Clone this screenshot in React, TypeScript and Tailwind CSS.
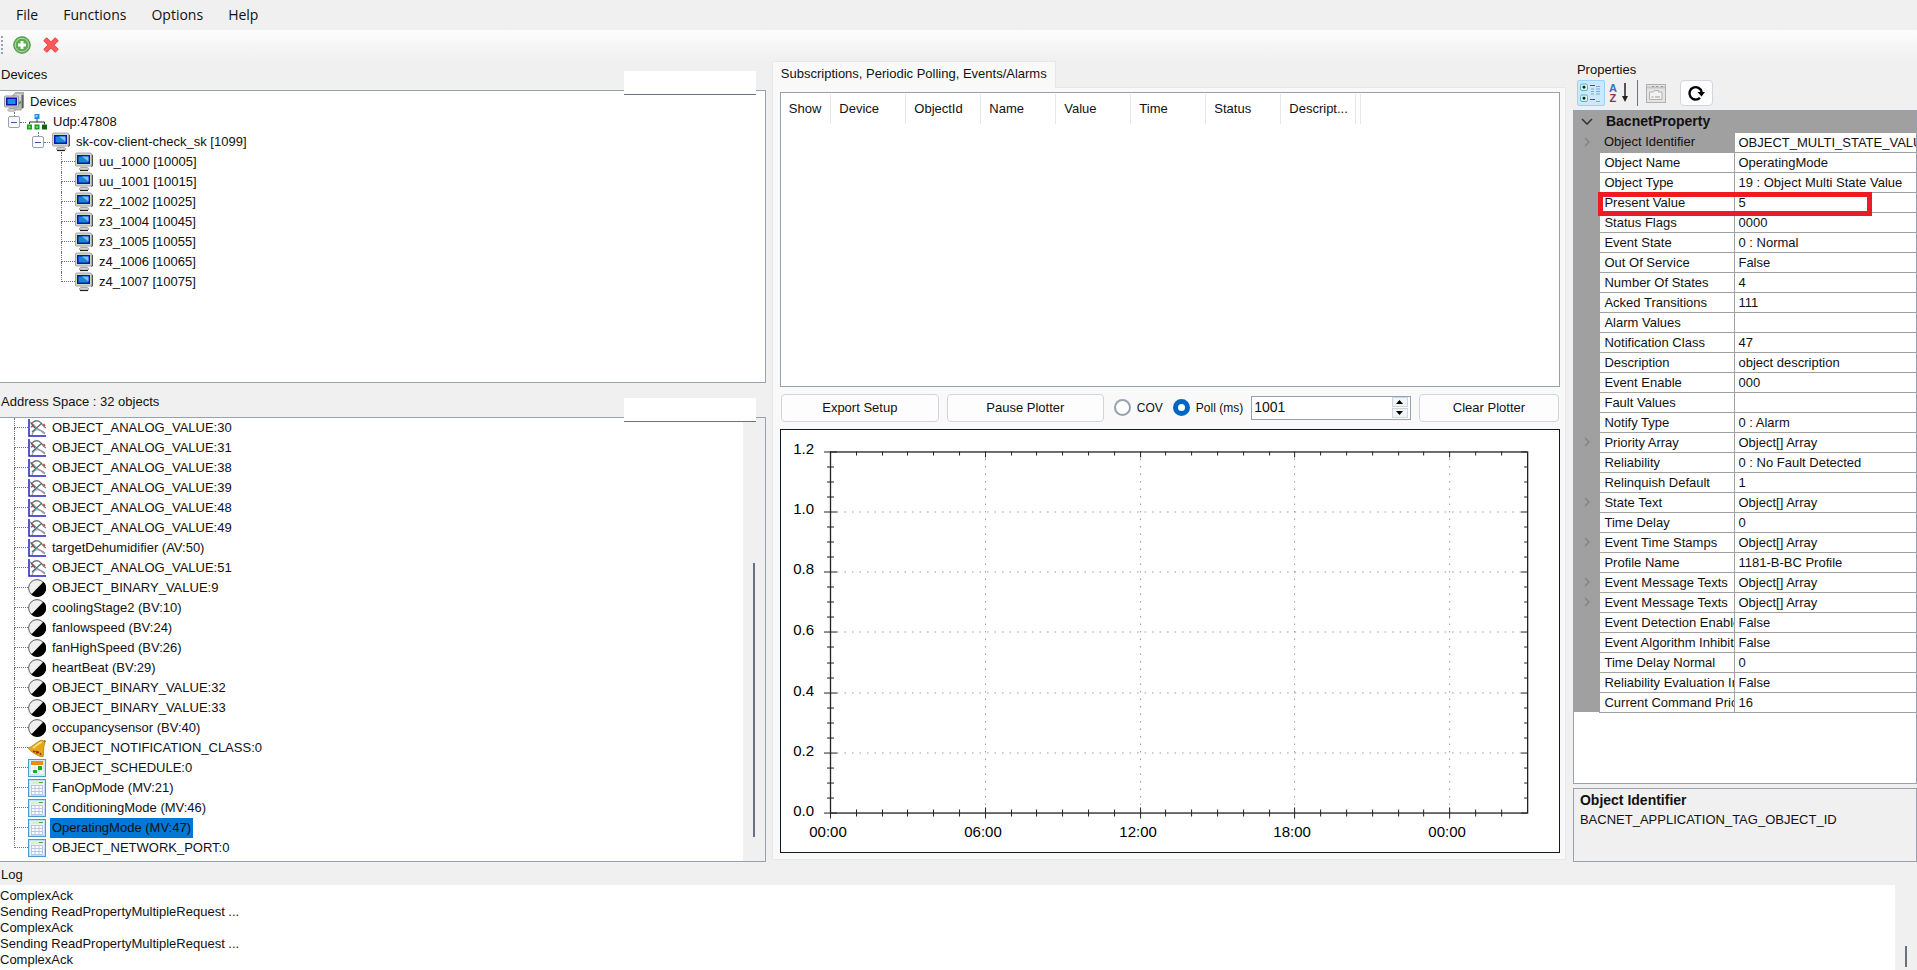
import type { ReactNode } from "react"

const devices = [
  "uu_1000 [10005]",
  "uu_1001 [10015]",
  "z2_1002 [10025]",
  "z3_1004 [10045]",
  "z3_1005 [10055]",
  "z4_1006 [10065]",
  "z4_1007 [10075]",
]

type ObjectKind = "analog" | "binary" | "bell" | "schedule" | "table"

const objects: { kind: ObjectKind; name: string; selected?: boolean }[] = [
  { kind: "analog", name: "OBJECT_ANALOG_VALUE:30" },
  { kind: "analog", name: "OBJECT_ANALOG_VALUE:31" },
  { kind: "analog", name: "OBJECT_ANALOG_VALUE:38" },
  { kind: "analog", name: "OBJECT_ANALOG_VALUE:39" },
  { kind: "analog", name: "OBJECT_ANALOG_VALUE:48" },
  { kind: "analog", name: "OBJECT_ANALOG_VALUE:49" },
  { kind: "analog", name: "targetDehumidifier (AV:50)" },
  { kind: "analog", name: "OBJECT_ANALOG_VALUE:51" },
  { kind: "binary", name: "OBJECT_BINARY_VALUE:9" },
  { kind: "binary", name: "coolingStage2 (BV:10)" },
  { kind: "binary", name: "fanlowspeed (BV:24)" },
  { kind: "binary", name: "fanHighSpeed (BV:26)" },
  { kind: "binary", name: "heartBeat (BV:29)" },
  { kind: "binary", name: "OBJECT_BINARY_VALUE:32" },
  { kind: "binary", name: "OBJECT_BINARY_VALUE:33" },
  { kind: "binary", name: "occupancysensor (BV:40)" },
  { kind: "bell", name: "OBJECT_NOTIFICATION_CLASS:0" },
  { kind: "schedule", name: "OBJECT_SCHEDULE:0" },
  { kind: "table", name: "FanOpMode (MV:21)" },
  { kind: "table", name: "ConditioningMode (MV:46)" },
  { kind: "table", name: "OperatingMode (MV:47)", selected: true },
  { kind: "table", name: "OBJECT_NETWORK_PORT:0" },
]

const properties: { name: string; value: string; expandable?: boolean }[] = [
  { name: "Object Identifier", value: "OBJECT_MULTI_STATE_VALUE:47", expandable: true },
  { name: "Object Name", value: "OperatingMode" },
  { name: "Object Type", value: "19 : Object Multi State Value" },
  { name: "Present Value", value: "5" },
  { name: "Status Flags", value: "0000" },
  { name: "Event State", value: "0 : Normal" },
  { name: "Out Of Service", value: "False" },
  { name: "Number Of States", value: "4" },
  { name: "Acked Transitions", value: "111" },
  { name: "Alarm Values", value: "" },
  { name: "Notification Class", value: "47" },
  { name: "Description", value: "object description" },
  { name: "Event Enable", value: "000" },
  { name: "Fault Values", value: "" },
  { name: "Notify Type", value: "0 : Alarm" },
  { name: "Priority Array", value: "Object[] Array", expandable: true },
  { name: "Reliability", value: "0 : No Fault Detected" },
  { name: "Relinquish Default", value: "1" },
  { name: "State Text", value: "Object[] Array", expandable: true },
  { name: "Time Delay", value: "0" },
  { name: "Event Time Stamps", value: "Object[] Array", expandable: true },
  { name: "Profile Name", value: "1181-B-BC Profile" },
  { name: "Event Message Texts", value: "Object[] Array", expandable: true },
  { name: "Event Message Texts", value: "Object[] Array", expandable: true },
  { name: "Event Detection Enable", value: "False" },
  { name: "Event Algorithm Inhibit", value: "False" },
  { name: "Time Delay Normal", value: "0" },
  { name: "Reliability Evaluation Inhibit", value: "False" },
  { name: "Current Command Priority", value: "16" },
]

const columns = ["Device", "ObjectId", "Name", "Value", "Time", "Status", "Descript..."]

const log = [
  "ComplexAck",
  "Sending ReadPropertyMultipleRequest ...",
  "ComplexAck",
  "Sending ReadPropertyMultipleRequest ...",
  "ComplexAck",
]

function MonitorIcon() {
  return (
    <svg viewBox="0 0 18 20" className="h-5 w-[18px] shrink-0">
      <path d="M16 2l2 1v11l-2 1z" fill="#555" />
      <rect x="0.5" y="1" width="16" height="13" rx="1" fill="#d4d4d0" stroke="#a8a8a8" />
      <rect x="2" y="3" width="13" height="9" fill="#0a14b4" />
      <rect x="3.5" y="4.5" width="10" height="6" fill="#1487d8" />
      <path d="M7 4.500h6.500v5z" fill="#7fc0f0" />
      <path d="M6 14h6l1 2H5z" fill="#c8c8c8" />
      <ellipse cx="9" cy="17" rx="5" ry="1.500" fill="#d8d8d8" stroke="#888" strokeWidth="0.6" />
      <path d="M5 18.500h8" stroke="#222" strokeWidth="1.200" />
    </svg>
  )
}

function ServerIcon() {
  return (
    <svg viewBox="0 0 20 20" className="size-5 shrink-0">
      <path d="M9 3l3-3h7l1 1v14l-3 3H9z" fill="#b8b8b4" stroke="#888" strokeWidth="0.6" />
      <path d="M11 3h6M11 5h6M11 7h6" stroke="#f2f2f2" />
      <path d="M18.500 3v13" stroke="#5a5a5a" strokeWidth="1.600" />
      <path d="M14 12l3-2" stroke="#1fae1f" strokeWidth="2" />
      <rect x="0.500" y="4" width="14" height="11" rx="1" fill="#d6d6d2" stroke="#999" />
      <rect x="2" y="5.500" width="11" height="8" fill="#0a14b4" />
      <rect x="3.500" y="7" width="8" height="5" fill="#1c90dc" />
      <path d="M5 15h5v2H5z" fill="#bbb" />
      <ellipse cx="7.500" cy="18" rx="4" ry="1.300" fill="#ddd" stroke="#777" strokeWidth="0.600" />
    </svg>
  )
}

function NetworkIcon() {
  return (
    <svg viewBox="0 0 20 20" className="size-5 shrink-0">
      <path d="M10 6v4M2.500 12v-2h15v2" fill="none" stroke="#333" />
      <rect x="7.500" y="2" width="5" height="5" fill="#2c8ae0" />
      <rect x="8.500" y="3" width="2" height="2" fill="#9ad0ff" />
      <rect x="0" y="12.500" width="5" height="5" fill="#18a018" />
      <rect x="1.500" y="14" width="2" height="2" fill="#5be05b" />
      <rect x="7.500" y="12.500" width="5" height="5" fill="#18a018" />
      <rect x="9" y="14" width="2" height="2" fill="#5be05b" />
      <rect x="15" y="12.500" width="5" height="5" fill="#0b660b" />
    </svg>
  )
}

function ObjectIcon({ kind }: { kind: ObjectKind }) {
  switch (kind) {
    case "analog":
      return (
        <svg viewBox="0 0 18 18" className="size-[18px] shrink-0" fill="none">
          <path d="M4 4C7 1 11 1 13 4s3 4 5 5" stroke="#777" strokeWidth="1.300" />
          <path d="M2 3c3 1 5 5 8 7s5 2 7 4" stroke="#999" strokeWidth="1.200" />
          <path d="M4 16c1-4 4-6 7-5s4 3 6 4" stroke="#999" strokeWidth="1.200" />
          <path d="M3 4l4 5" stroke="#555" strokeWidth="1.300" />
          <path d="M3 8l2-1M15.500 5l1.500 2" stroke="#d04040" strokeWidth="1.500" />
          <path d="M4 13l10-9" stroke="#3f7474" strokeWidth="1.300" />
          <path d="M1 0v17h17" stroke="#2020c8" strokeWidth="1.500" />
        </svg>
      )
    case "binary":
      return (
        <svg viewBox="0 0 18 18" className="size-[18px] shrink-0">
          <circle cx="9" cy="9" r="8.400" fill="#efefef" stroke="#333" strokeWidth="0.800" />
          <path d="M15.500 2.800A8.700 8.700 0 0 1 3.200 15.500z" fill="#000" />
        </svg>
      )
    case "bell":
      return (
        <svg viewBox="0 0 18 18" className="size-[18px] shrink-0">
          <path d="M16.500 0.800L18 2l-1 2-2-2z" fill="#b07808" />
          <path d="M0 9C5 8 9 2 14 1l3 3c-2 4-1 10-2 14C9 17 3 13 0 9z" fill="#e6a817" stroke="#a87408" strokeWidth="0.700" />
          <path d="M5 9c3-2 5-5 9-6" stroke="#ffe38a" strokeWidth="1.600" fill="none" />
          <path d="M5 12l2 1M8 12l1 2 2-1M12 14l1 2" stroke="#a03008" strokeWidth="1.500" />
        </svg>
      )
    case "schedule":
      return (
        <svg viewBox="0 0 18 18" className="size-[18px] shrink-0">
          <rect x="0.500" y="0.500" width="17" height="17" fill="#cfe8fa" stroke="#4a9ccc" />
          <rect x="3" y="3" width="12" height="12" fill="#fff" />
          <rect x="3" y="2" width="12" height="4" fill="#f08a10" />
          <path d="M3 9h12M3 12h12M7 6v9M11 6v9" stroke="#c8d4e4" strokeWidth="0.700" />
          <rect x="10" y="7" width="4" height="4" fill="#16b016" />
          <rect x="5" y="11" width="4" height="3" fill="#16b016" />
        </svg>
      )
    case "table":
      return (
        <svg viewBox="0 0 18 18" className="size-[18px] shrink-0">
          <rect x="0.500" y="0.500" width="17" height="17" fill="#bfe0f8" stroke="#4a9ccc" />
          <path d="M2 2h14v14H2z" fill="#eaf5fd" />
          <rect x="3" y="2.500" width="12" height="2.500" fill="#d8efc8" />
          <path d="M11 3.500h4" stroke="#4aa82a" />
          <rect x="3.500" y="6.500" width="11" height="9" fill="#fff" stroke="#a8bcdc" strokeWidth="0.800" />
          <path d="M7 6.500v9M11 6.500v9M3.500 9.500h11M3.500 12.500h11" stroke="#a8bcdc" strokeWidth="0.800" />
        </svg>
      )
  }
}

function Expander({ label }: { label: string }) {
  return (
    <span className="flex h-5 w-3 flex-col items-center">
      <span className="h-1 border-l border-dotted border-gray-500" />
      <button
        aria-label={label}
        className="flex size-3 items-center justify-center rounded-xs border border-gray-400 bg-gray-50"
      >
        <span className="h-px w-1.5 bg-[#3c5aa0]" />
      </button>
    </span>
  )
}

function Branch({ last }: { last: boolean }) {
  return (
    <span className="flex h-5 w-3.5 flex-col">
      <span className="h-2.5 border-b border-l border-dotted border-gray-500" />
      {!last && <span className="h-2.5 border-l border-dotted border-gray-500" />}
    </span>
  )
}

function DeviceTree() {
  return (
    <ul className="py-px">
      <li className="flex h-5 items-center gap-1.5 pl-1">
        <ServerIcon />
        Devices
      </li>
      <li className="flex h-5 items-center pl-2">
        <Expander label="Collapse Udp:47808" />
        <span className="mr-px w-1.5 border-b border-dotted border-gray-500" />
        <NetworkIcon />
        <span className="ml-1.5">Udp:47808</span>
      </li>
      <li className="flex h-5 items-center pl-8">
        <Expander label="Collapse sk-cov-client-check_sk" />
        <span className="mr-0.5 w-1.5 border-b border-dotted border-gray-500" />
        <MonitorIcon />
        <span className="ml-1.5">sk-cov-client-check_sk [1099]</span>
      </li>
      {devices.map((name, i) => (
        <li key={name} className="flex h-5 items-center pl-[61px]">
          <Branch last={i === devices.length - 1} />
          <MonitorIcon />
          <span className="ml-1.5">{name}</span>
        </li>
      ))}
    </ul>
  )
}

function ObjectTree() {
  return (
    <ul className="min-w-0 flex-1">
      {objects.map((object, i) => (
        <li key={object.name} className="flex h-5 items-center pl-3.5">
          <Branch last={i === objects.length - 1} />
          <ObjectIcon kind={object.kind} />
          <span className={object.selected ? "ml-1 bg-[#0078d7] px-0.5 leading-5" : "ml-1 px-0.5"}>
            {object.name}
          </span>
        </li>
      ))}
    </ul>
  )
}

function PanelHeader({ title, field, className }: { title: string; field: string; className: string }) {
  return (
    <div className={`relative flex items-center px-px ${className}`}>
      <h2>{title}</h2>
      <input
        aria-label={field}
        className="absolute right-2.5 -bottom-[5px] h-6 w-[132px] border-b border-gray-500 bg-white outline-none"
      />
    </div>
  )
}

// plot area inside the chart, in viewBox units
const plot = { left: 49, right: 746, top: 21, bottom: 382, hour: 25.8, step: 15.05 }

function Plotter() {
  const hours = Array.from({ length: 27 }, (_, i) => i)
  const steps = Array.from({ length: 25 }, (_, i) => i)
  return (
    <svg viewBox="0 0 778 421" className="size-full" fontFamily="Liberation Sans, Arial, sans-serif" fontSize="15">
      <g stroke="#999" strokeDasharray="1.500 6">
        {[1, 2, 3, 4].map((i) => {
          const x = Math.round(plot.left + i * 6 * plot.hour) + 0.5
          return <line key={i} x1={x} x2={x} y1={plot.top + 7} y2={plot.bottom} />
        })}
        {[1, 2, 3, 4, 5].map((i) => {
          const y = Math.round(plot.bottom - i * 4 * plot.step) + 0.5
          return <line key={i} x1={plot.left + 7} x2={plot.right} y1={y} y2={y} />
        })}
      </g>
      <g stroke="#222">
        {hours.map((i) => {
          const x = Math.round(plot.left + i * plot.hour) + 0.5
          const size = i % 6 === 0 ? 5 : 3
          return (
            <g key={i}>
              <line x1={x} x2={x} y1={plot.bottom - size} y2={plot.bottom + size + 1} />
              <line x1={x} x2={x} y1={plot.top} y2={plot.top + size + 1} />
            </g>
          )
        })}
        {steps.map((i) => {
          const y = Math.round(plot.bottom - i * plot.step) + 0.5
          const size = i % 4 === 0 ? 6 : 3
          return (
            <g key={i}>
              <line x1={plot.left - size} x2={plot.left + size + 1} y1={y} y2={y} />
              <line x1={plot.right - size} x2={plot.right} y1={y} y2={y} />
            </g>
          )
        })}
        <rect
          x={plot.left + 0.5}
          y={plot.top + 0.5}
          width={plot.right - plot.left}
          height={plot.bottom - plot.top}
          fill="none"
          strokeWidth="1.300"
        />
      </g>
      {["0.0", "0.2", "0.4", "0.6", "0.8", "1.0", "1.2"].map((label, i) => (
        <text key={label} x="33" y={Math.round(plot.bottom - i * 4 * plot.step) + 3} textAnchor="end">
          {label}
        </text>
      ))}
      {["00:00", "06:00", "12:00", "18:00", "00:00"].map((label, i) => (
        <text key={i} x={Math.round(plot.left + i * 6 * plot.hour) - 2} y="406" textAnchor="middle">
          {label}
        </text>
      ))}
    </svg>
  )
}

function PlotButton({ children, className }: { children: ReactNode; className: string }) {
  return (
    <button className={`h-7 shrink-0 rounded border border-gray-300 bg-[#fdfdfd] ${className}`}>{children}</button>
  )
}

function PlotControls() {
  const radio =
    "size-[17px] shrink-0 appearance-none rounded-full border-2 border-gray-400 bg-white checked:border-[5px] checked:border-[#0067c0]"
  return (
    <div className="my-[7px] flex h-7 items-center px-px">
      <PlotButton className="w-[158px]">Export Setup</PlotButton>
      <PlotButton className="ml-2 w-[157px]">Pause Plotter</PlotButton>
      <label className="ml-2.5 flex shrink-0 items-center gap-1.5 text-xs">
        <input type="radio" name="mode" className={radio} />
        COV
      </label>
      <label className="ml-2.5 flex shrink-0 items-center gap-1.5 text-xs">
        <input type="radio" name="mode" defaultChecked className={radio} />
        Poll (ms)
      </label>
      <div className="ml-2 flex h-6 min-w-0 flex-1 items-center border border-gray-400 bg-white pr-0.5">
        <input aria-label="Poll interval" defaultValue="1001" className="w-0 flex-1 px-0.5 text-[14px] outline-none" />
        <div className="flex flex-col gap-px">
          <button aria-label="Increase" className="flex h-2.5 w-4 items-center justify-center border border-gray-300 bg-gray-100">
            <svg viewBox="0 0 7 4" className="h-1 w-[7px]">
              <path d="M0 4L3.500 0 7 4z" />
            </svg>
          </button>
          <button aria-label="Decrease" className="flex h-2.5 w-4 items-center justify-center border border-gray-300 bg-gray-100">
            <svg viewBox="0 0 7 4" className="h-1 w-[7px]">
              <path d="M0 0L3.500 4 7 0z" />
            </svg>
          </button>
        </div>
      </div>
      <PlotButton className="ml-2 w-[140px]">Clear Plotter</PlotButton>
    </div>
  )
}

function Subscriptions() {
  return (
    <section className="mr-1.5 ml-[5px] flex min-w-0 flex-1 flex-col pt-px pb-0.5">
      <div role="tablist" className="z-10 flex">
        <button role="tab" aria-selected="true" className="-mb-px h-[27px] border border-b-0 border-gray-200 bg-[#f9f9f9] px-2 pb-[3px]">
          Subscriptions, Periodic Polling, Events/Alarms
        </button>
      </div>
      <div className="flex min-h-0 flex-1 flex-col border border-gray-200 bg-[#f9f9f9] pt-1 pr-[5px] pb-1.5 pl-[7px]">
        <div className="min-h-0 flex-294 border border-gray-400 bg-white pt-px">
          <table className="table-fixed text-left">
            <thead>
              <tr className="h-[30px]">
                <th className="w-[50px] border-r border-gray-200 pl-2 font-normal">Show</th>
                {columns.map((name) => (
                  <th key={name} className="w-[75px] border-r border-gray-200 pl-2 font-normal">
                    {name}
                  </th>
                ))}
                <th className="w-[5px] border-r border-gray-200" />
              </tr>
            </thead>
          </table>
        </div>
        <PlotControls />
        <div className="min-h-0 flex-425 border border-gray-900 bg-white">
          <Plotter />
        </div>
      </div>
    </section>
  )
}

function PropertyToolbar() {
  return (
    <div className="flex h-[30px] items-start pl-1">
      <button aria-label="Categorized" className="flex h-[26px] w-7 items-center justify-center rounded-xs border border-[#99d1ff] bg-[#cce8ff]">
        <svg viewBox="0 0 21 20" className="h-5 w-[21px]">
          <rect x="0.500" y="1" width="7" height="6.500" rx="1.500" fill="#d8f6f0" stroke="#5cb8b0" />
          <rect x="0.500" y="12" width="7" height="6.500" rx="1.500" fill="#d8f6f0" stroke="#5cb8b0" />
          <path d="M2.500 4.200h3M4 2.700v3M2.500 15.200h3M4 13.700v3" stroke="#000" strokeWidth="1.300" />
          <path d="M10 2.500h5M10 16.500h5" stroke="#555" />
          <path d="M11 6h3M16 6h4M11 8.500h3M16 8.500h4M11 11h3M16 11h4M16 3.500h4M16 18.500h4" stroke="#7aa4d8" />
        </svg>
      </button>
      <button aria-label="Alphabetical" className="ml-1 flex h-[26px] items-center">
        <span className="flex flex-col text-[11px] leading-[10px] font-bold">
          <span className="text-[#3a6fc8]">A</span>
          <span className="text-[#8c3050]">Z</span>
        </span>
        <svg viewBox="0 0 8 20" className="ml-1 h-5 w-2">
          <path d="M4 0v16" stroke="#222" strokeWidth="1.500" />
          <path d="M1 13h6l-3 6z" fill="#222" />
        </svg>
      </button>
      <span className="mx-2 h-[26px] w-px bg-gray-500" />
      <button aria-label="Property pages" disabled className="flex h-[26px] items-center">
        <svg viewBox="0 0 20 19" className="h-[19px] w-5" fill="none" stroke="#b0b0b0">
          <rect x="0.500" y="0.500" width="19" height="18" fill="#e4e4e4" />
          <path d="M1 3.500h18" stroke="#c4c4c4" strokeWidth="2" />
          <path d="M6 2.500h2M10 2.500h2M15 2.500h2" stroke="#999" />
          <path d="M3.500 8h4l1-1.500h4V8H16v7.500H3.500z" fill="#f2f2f2" />
          <path d="M5.500 13h2M9 13h5" stroke="#999" />
        </svg>
      </button>
      <button aria-label="Refresh" className="ml-3.5 flex h-[26px] w-[33px] items-center justify-center rounded border border-gray-300 bg-[#fdfdfd]">
        <svg viewBox="0 0 18 18" className="size-[18px]">
          <path d="M13 13.800A6.200 6.200 0 1 1 14.700 8" fill="none" stroke="#000" strokeWidth="2.400" />
          <path d="M10.500 8H18l-3.500 4.500z" />
        </svg>
      </button>
    </div>
  )
}

function PropertyPanel() {
  return (
    <section className="flex w-[18%] flex-col pl-px">
      <h2 className="h-5 pl-1 leading-5">Properties</h2>
      <PropertyToolbar />
      <div className="relative min-h-0 flex-1 border border-gray-400 bg-white">
        <table className="w-full table-fixed border-collapse">
          <colgroup>
            <col className="w-[26px]" />
            <col className="w-[135px]" />
            <col />
          </colgroup>
          <tbody>
            <tr className="h-[21px] bg-[#a0a0a0]">
              <td className="text-center">
                <svg viewBox="0 0 12 7" className="mx-auto h-[7px] w-3">
                  <path d="M1 1l5 5 5-5" fill="none" stroke="#333" strokeWidth="1.600" />
                </svg>
              </td>
              <th colSpan={2} className="py-0 pl-1.5 text-left text-[14px] leading-5 font-bold">
                BacnetProperty
              </th>
            </tr>
            {properties.map((property, i) => (
              <tr key={i} className="h-5">
                <td className="bg-[#a0a0a0] p-0">
                  {property.expandable && (
                    <svg viewBox="0 0 6 10" className="mx-auto h-2.5 w-1.5">
                      <path d="M1 1l4 4-4 4" fill="none" stroke="#828282" strokeWidth="1.400" />
                    </svg>
                  )}
                </td>
                <td
                  className={
                    i === 0
                      ? "overflow-hidden bg-[#a0a0a0] py-0 pl-1 leading-[19px] whitespace-nowrap"
                      : "overflow-hidden border border-[#a0a0a0] py-0 pl-1 leading-[19px] whitespace-nowrap"
                  }
                >
                  {property.name}
                </td>
                <td className="overflow-hidden border-y border-l border-[#a0a0a0] py-0 pl-[3px] leading-[19px] whitespace-nowrap">
                  {property.value}
                </td>
              </tr>
            ))}
          </tbody>
        </table>
        <div className="absolute top-[81px] left-6 h-6 w-4/5 border-[5px] border-[#ed1c24]" />
      </div>
      <div className="mt-1 h-[74px] border border-gray-400 px-1.5 pt-0.5 text-[14px] leading-[19px]">
        <h3 className="font-bold">Object Identifier</h3>
        <p className="text-[13px]">BACNET_APPLICATION_TAG_OBJECT_ID</p>
      </div>
    </section>
  )
}

export default function App() {
  return (
    <div className="flex h-screen flex-col overflow-hidden bg-[#f0f0f0] font-['Liberation_Sans',Arial,sans-serif] text-[13px] text-[#111]">
      <nav className="flex h-[30px] items-center gap-[25px] pb-0.5 pl-4 font-['Open_Sans','Noto_Sans',sans-serif] text-[14px]">
        <button>File</button>
        <button>Functions</button>
        <button>Options</button>
        <button>Help</button>
      </nav>
      <div className="flex h-[30px] items-center bg-linear-to-b from-[#fdfdfd] to-[#f0f0f0] pl-px">
        <span className="h-[18px] border-l-2 border-dotted border-gray-400" />
        <button aria-label="Add device" className="ml-2.5">
          <svg viewBox="0 0 18 18" className="size-[18px]">
            <circle cx="9" cy="9" r="8.300" fill="#5cae50" stroke="#4c9444" />
            <circle cx="9" cy="9" r="6.800" fill="none" stroke="#b4dcaa" />
            <path d="M9 5v8M5 9h8" stroke="#fff" strokeWidth="2.800" />
          </svg>
        </button>
        <button aria-label="Remove device" className="ml-3">
          <svg viewBox="0 0 16 16" className="size-4">
            <path d="M2 2l12 12M14 2L2 14" stroke="#e43c3c" strokeWidth="5" />
            <path d="M2 2l12 12M14 2L2 14" stroke="#ff5a5a" strokeWidth="3.400" />
          </svg>
        </button>
      </div>
      <main className="flex min-h-0 flex-1">
        <section className="flex w-2/5 flex-col pr-px">
          <PanelHeader title="Devices" field="Find device" className="h-[30px]" />
          <div className="min-h-0 flex-292 border-y border-r border-gray-400 bg-white">
            <DeviceTree />
          </div>
          <PanelHeader title="Address Space : 32 objects" field="Find object" className="h-[34px] pt-1" />
          <div className="flex min-h-0 flex-445 border-y border-r border-gray-400 bg-white">
            <ObjectTree />
            <div className="flex w-[22px] flex-col items-center bg-[#f0f0f0]">
              <span className="mt-auto mb-6 h-[274px] w-0.5 bg-gray-500" />
            </div>
          </div>
        </section>
        <Subscriptions />
        <PropertyPanel />
      </main>
      <h2 className="h-[23px] px-px pt-[3px]">Log</h2>
      <div className="flex h-[85px] bg-white">
        <div className="flex-1 pt-[3px] leading-4">
          {log.map((line, i) => (
            <p key={i}>{line}</p>
          ))}
        </div>
        <div className="flex w-[22px] items-end justify-center bg-[#f0f0f0] pb-[3px]">
          <span className="h-[21px] w-0.5 bg-gray-500" />
        </div>
      </div>
    </div>
  )
}
